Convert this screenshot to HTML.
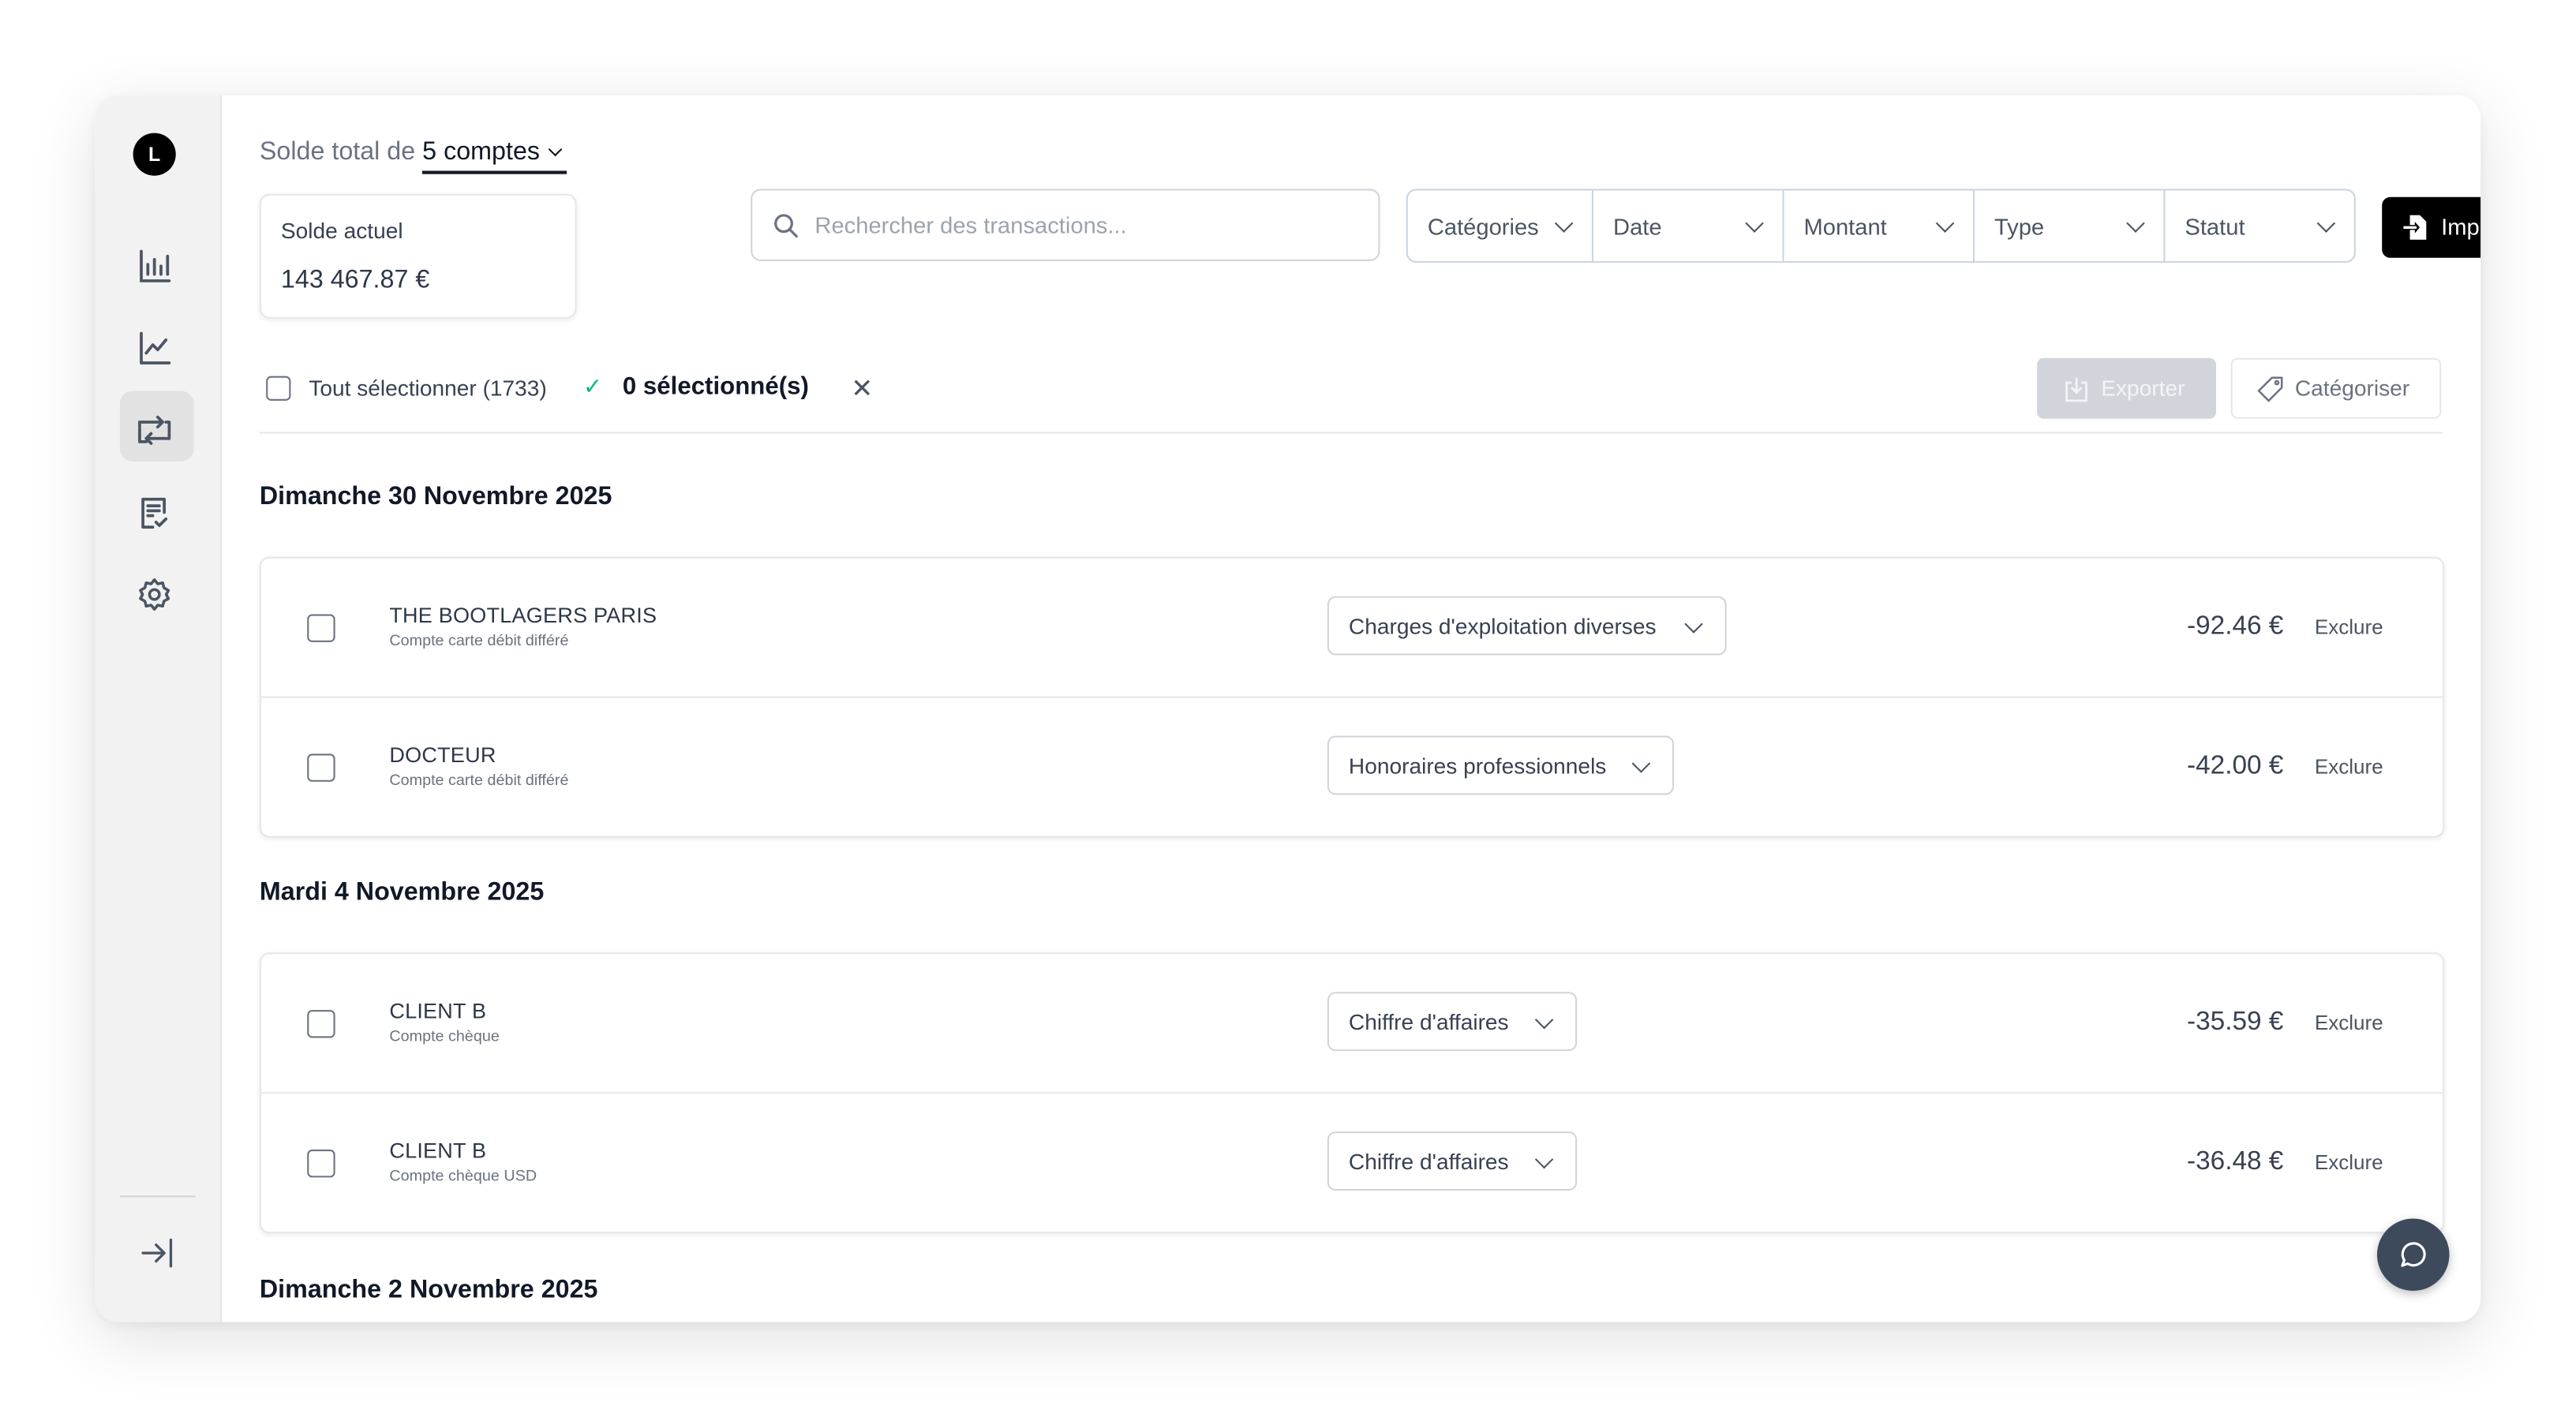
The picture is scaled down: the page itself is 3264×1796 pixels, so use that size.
<!DOCTYPE html>
<html><head><meta charset="utf-8"><style>
html,body{margin:0;padding:0;background:#fff;width:3264px;height:1796px;overflow:hidden}
#s{position:absolute;left:0;top:0;width:1570px;height:863px;transform:scale(2.0815);transform-origin:0 0;font-family:"Liberation Sans",sans-serif;color:#374151}
.a{position:absolute}
.win{left:58px;top:58px;width:1452px;height:747px;border-radius:14px;background:#fff;box-shadow:0 10px 40px rgba(0,0,0,.12),0 2px 8px rgba(0,0,0,.06);overflow:hidden}
.side{left:0;top:0;width:76px;height:747px;background:#f2f2f2;border-right:1px solid #e3e3e3}
.ic{position:absolute;left:24px;width:24px;height:24px}
.cb{position:absolute;width:15px;height:15px;border:1.3px solid #6b7280;border-radius:3px;box-sizing:border-box}
.card{border:1px solid #e5e7eb;border-radius:6px;box-shadow:0 1px 3px rgba(0,0,0,.08);background:#fff}
.row{position:absolute;left:0;width:1328px;height:85px}
.nm{position:absolute;left:78px;font-size:13px;color:#2d3748;letter-spacing:.1px}
.sub{position:absolute;left:78px;font-size:9.5px;color:#6b7280}
.sel{position:absolute;left:649px;height:36px;border:1px solid #d1d5db;border-radius:5px;font-size:13.5px;color:#374151;line-height:36px;padding-left:12px;box-sizing:border-box}
.amt{position:absolute;right:97px;font-size:16px;color:#374151}
.ex{position:absolute;left:1250px;font-size:12.5px;color:#4b5563}
.fl{position:absolute;top:0;height:44px;line-height:44px;font-size:14px;color:#4b5563;padding-left:12px;box-sizing:border-box;border-left:1px solid #cbd5e1}
.chev{position:absolute;width:7px;height:7px;border-right:1.4px solid #4b5563;border-bottom:1.4px solid #4b5563;transform:rotate(45deg)}
h3{position:absolute;margin:0;font-size:15.5px;font-weight:bold;color:#111827;left:100px}
</style></head><body><div id="s">
<div class="a win">
 <div class="a side">
  <div class="a" style="left:23px;top:23px;width:26px;height:26px;border-radius:50%;background:#000;color:#fff;font-size:12px;font-weight:bold;text-align:center;line-height:26px">L</div>
  <svg class="ic" style="top:92px" viewBox="0 0 24 24" fill="none" stroke="#4b5563" stroke-width="1.8" stroke-linecap="round"><path d="M4 3v18h17M8 17v-6M12 17V8M16 17v-5M20 17V6"/></svg>
  <svg class="ic" style="top:142px" viewBox="0 0 24 24" fill="none" stroke="#4b5563" stroke-width="1.8" stroke-linecap="round" stroke-linejoin="round"><path d="M4 3v18h17M7 15l4-5 3 3 5-6"/></svg>
  <div class="a" style="left:15px;top:180px;width:45px;height:43px;border-radius:8px;background:#e2e2e2"></div>
  <svg class="ic" style="top:192px" viewBox="0 0 24 24" fill="none" stroke="#4b5563" stroke-width="1.8" stroke-linecap="round" stroke-linejoin="round"><path d="M3 10V7h14M14 4l3 3-3 3M3 11v8h4M21 14v3H7M10 20l-3-3 3-3M21 13V7h-2"/></svg>
  <svg class="ic" style="top:242px" viewBox="0 0 24 24" fill="none" stroke="#4b5563" stroke-width="1.8" stroke-linecap="round" stroke-linejoin="round"><path d="M18 12V4H5v17h6M8 8h7M8 11h7M8 14h3M13 18l2 2 4-4"/></svg>
  <svg class="ic" style="top:292px" viewBox="0 0 24 24" fill="none" stroke="#4b5563" stroke-width="1.7"><circle cx="12" cy="12" r="3"/><path d="M12 3l2 2.5 3-.6.8 3 2.7 1.6-1.3 2.5 1.3 2.5-2.7 1.6-.8 3-3-.6L12 21l-2-2.5-3 .6-.8-3L3.5 14.5 4.8 12 3.5 9.5l2.7-1.6.8-3 3 .6z" stroke-linejoin="round"/></svg>
  <div class="a" style="left:15px;top:670px;width:46px;height:1px;background:#d6d6d6"></div>
  <svg class="ic" style="top:693px;left:26px" viewBox="0 0 24 24" fill="none" stroke="#4b5563" stroke-width="1.6" stroke-linecap="round" stroke-linejoin="round"><path d="M3 12h13M11 7l5 5-5 5M20 4v16"/></svg>
 </div>
 <div class="a" style="left:100px;top:26px;font-size:15.5px;color:#6b7280">Solde total de <span style="color:#111827;border-bottom:2px solid #111827;padding-bottom:3px">5 comptes <span style="display:inline-block;width:5px;height:5px;border-right:1.3px solid #111;border-bottom:1.3px solid #111;transform:rotate(45deg);margin:0 4px 3px 2px"></span></span></div>
 <div class="a card" style="left:100px;top:60px;width:191px;height:74px">
  <div class="a" style="left:12px;top:14px;font-size:13.5px;color:#374151">Solde actuel</div>
  <div class="a" style="left:12px;top:43px;font-size:15.5px;color:#2d3748">143 467.87 €</div>
 </div>
 <div class="a" style="left:399px;top:57px;width:383px;height:44px;border:1px solid #d1d5db;border-radius:6px;box-sizing:border-box">
  <svg class="a" style="left:12px;top:13px" width="17" height="17" viewBox="0 0 24 24" fill="none" stroke="#6b7280" stroke-width="2.2" stroke-linecap="round"><circle cx="10" cy="10" r="7"/><path d="M15 15l6 6"/></svg>
  <div class="a" style="left:38px;top:13px;font-size:14px;color:#9ca3af">Rechercher des transactions...</div>
 </div>
 <div class="a" style="left:798px;top:57px;width:578px;height:45px;border:1px solid #cbd5e1;border-radius:6px;box-sizing:border-box">
  <div class="fl" style="left:0;width:113px;border-left:none">Catégories<i class="chev" style="left:91px;top:16px"></i></div>
  <div class="fl" style="left:112px;width:117px">Date<i class="chev" style="left:94px;top:16px"></i></div>
  <div class="fl" style="left:228px;width:117px">Montant<i class="chev" style="left:94px;top:16px"></i></div>
  <div class="fl" style="left:344px;width:117px">Type<i class="chev" style="left:94px;top:16px"></i></div>
  <div class="fl" style="left:460px;width:117px">Statut<i class="chev" style="left:94px;top:16px"></i></div>
 </div>
 <div class="a" style="left:1392px;top:62px;width:80px;height:37px;background:#000;border-radius:5px;color:#fff;font-size:14px;line-height:37px">
  <svg class="a" style="left:13px;top:11px" width="14" height="15" viewBox="0 0 14 15"><path d="M4 0h6l4 4v11H4V9h3v2l3-3.5L7 4v2H4z" fill="#fff"/><path d="M0 7.5h8" stroke="#fff" stroke-width="1.6"/></svg>
  <span style="position:absolute;left:36px">Imp</span>
 </div>
 <div class="cb" style="left:104px;top:171px"></div>
 <div class="a" style="left:130px;top:171px;font-size:13.5px;color:#374151">Tout sélectionner (1733)</div>
 <div class="a" style="left:297px;top:169px;font-size:14px;color:#10b981">✓</div>
 <div class="a" style="left:321px;top:169px;font-size:15px;font-weight:bold;color:#111827">0 sélectionné(s)</div>
 <div class="a" style="left:460px;top:169px;font-size:16px;color:#4b5563">✕</div>
 <div class="a" style="left:1182px;top:160px;width:109px;height:37px;border-radius:4px;background:#d1d5db;color:#f3f4f6;font-size:13.5px;line-height:37px">
  <svg class="a" style="left:17px;top:11px" width="14" height="16" viewBox="0 0 14 16" fill="none" stroke="#f3f4f6" stroke-width="1.3"><path d="M4 4H1v11h12V4h-3M7 1v9M4 7l3 3 3-3"/></svg><span style="position:absolute;left:39px">Exporter</span></div>
 <div class="a" style="left:1300px;top:160px;width:128px;height:37px;border-radius:4px;border:1px solid #e5e7eb;box-sizing:border-box;color:#6b7280;font-size:13.5px;line-height:35px">
  <svg class="a" style="left:15px;top:10px" width="16" height="16" viewBox="0 0 16 16" fill="none" stroke="#6b7280" stroke-width="1.2"><path d="M9 1h6v6l-8 8-6-6z"/><circle cx="12" cy="4" r="1"/></svg><span style="position:absolute;left:38px">Catégoriser</span></div>
 <div class="a" style="left:100px;top:205px;width:1329px;height:1px;background:#e5e7eb"></div>
 <h3 style="top:236px">Dimanche 30 Novembre 2025</h3>
 <div class="a card" style="left:100px;top:281px;width:1328px;height:169px">
  <div class="row" style="top:0">
   <div class="cb" style="left:28px;top:34px;width:17px;height:17px"></div>
   <div class="nm" style="top:27px">THE BOOTLAGERS PARIS</div>
   <div class="sub" style="top:45px">Compte carte débit différé</div>
   <div class="sel" style="top:23px;width:243px">Charges d'exploitation diverses<i class="chev" style="left:218px;top:12px"></i></div>
   <div class="amt" style="top:33px">-92.46 €</div><div class="ex" style="top:35px">Exclure</div>
  </div>
  <div class="a" style="left:0;top:84px;width:1328px;height:1px;background:#e5e7eb"></div>
  <div class="row" style="top:85px">
   <div class="cb" style="left:28px;top:34px;width:17px;height:17px"></div>
   <div class="nm" style="top:27px">DOCTEUR</div>
   <div class="sub" style="top:45px">Compte carte débit différé</div>
   <div class="sel" style="top:23px;width:211px">Honoraires professionnels<i class="chev" style="left:186px;top:12px"></i></div>
   <div class="amt" style="top:33px">-42.00 €</div><div class="ex" style="top:35px">Exclure</div>
  </div>
 </div>
 <h3 style="top:477px">Mardi 4 Novembre 2025</h3>
 <div class="a card" style="left:100px;top:522px;width:1328px;height:169px">
  <div class="row" style="top:0">
   <div class="cb" style="left:28px;top:34px;width:17px;height:17px"></div>
   <div class="nm" style="top:27px">CLIENT B</div>
   <div class="sub" style="top:45px">Compte chèque</div>
   <div class="sel" style="top:23px;width:152px">Chiffre d'affaires<i class="chev" style="left:127px;top:12px"></i></div>
   <div class="amt" style="top:33px">-35.59 €</div><div class="ex" style="top:35px">Exclure</div>
  </div>
  <div class="a" style="left:0;top:84px;width:1328px;height:1px;background:#e5e7eb"></div>
  <div class="row" style="top:85px">
   <div class="cb" style="left:28px;top:34px;width:17px;height:17px"></div>
   <div class="nm" style="top:27px">CLIENT B</div>
   <div class="sub" style="top:45px">Compte chèque USD</div>
   <div class="sel" style="top:23px;width:152px">Chiffre d'affaires<i class="chev" style="left:127px;top:12px"></i></div>
   <div class="amt" style="top:33px">-36.48 €</div><div class="ex" style="top:35px">Exclure</div>
  </div>
 </div>
 <h3 style="top:719px">Dimanche 2 Novembre 2025</h3>
 <div class="a" style="left:1389px;top:684px;width:44px;height:44px;border-radius:50%;background:#3d4a5c;box-shadow:0 2px 6px rgba(0,0,0,.25)">
  <svg class="a" style="left:12px;top:12px" width="20" height="20" viewBox="0 0 24 24" fill="none" stroke="#fff" stroke-width="1.8" stroke-linejoin="round"><path d="M4 20l1.5-4A8 8 0 1 1 8 18.5z"/></svg>
 </div>
</div>
</div></body></html>
